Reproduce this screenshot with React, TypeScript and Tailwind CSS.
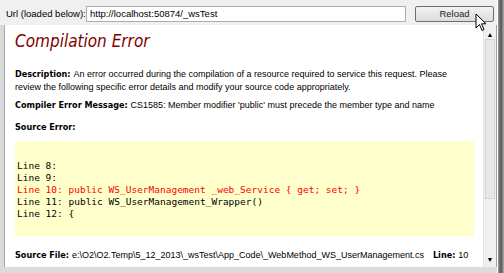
const verdana = { fontFamily: '"DejaVu Sans Condensed", "DejaVu Sans", sans-serif' };

function Cursor() {
  return (
    <svg className="absolute left-[475px] top-[13px]" width="13" height="19" viewBox="0 0 13 19">
      <path d="M1 1 L1 15 L4.5 11.5 L7 17.5 L9 16.5 L6.5 10.8 L11 10.8 Z" fill="#fff" stroke="#000" strokeWidth="1" strokeLinejoin="round" />
    </svg>
  );
}

function Scrollbar() {
  return (
    <div className="w-[14px] flex flex-col bg-[#f0f0f0] border-l border-[#e3e3e3] border-r border-r-[#a0a0a0]">
      <div className="h-[4px]" />
      <div className="h-[10px] flex items-center justify-center text-[7px] leading-none text-black">▲</div>
      <div className="mx-[1px] h-[160px] border border-[#d4d4d4] bg-[#e8e8e8]" />
      <div className="flex-1" />
      <div className="h-[12px] flex items-center justify-center text-[7px] leading-none text-black">▼</div>
      <div className="h-[2px]" />
    </div>
  );
}

const code = [
  { t: 'Line 8:', red: false },
  { t: 'Line 9:', red: false },
  { t: 'Line 10: public WS_UserManagement _web_Service { get; set; }', red: true },
  { t: 'Line 11: public WS_UserManagement_Wrapper()', red: false },
  { t: 'Line 12: {', red: false },
];

export default function App() {
  return (
    <div className="relative w-[504px] h-[273px] flex bg-[#f0f0f0] overflow-hidden" style={{ fontFamily: '"Liberation Sans", Arial, sans-serif' }}>
      <div className="w-[497px] flex flex-col">
        {/* toolbar */}
        <div className="h-[25px] flex items-center pl-[6px] pt-[3px]">
          <span className="text-[9.5px] text-black w-[80px]">Url (loaded below):</span>
          <div className="w-[320px] h-[16px] bg-white border border-[#abadb3] flex items-center pl-[3px] text-[9.5px] text-black">
            http://localhost:50874/_wsTest
          </div>
          <div className="ml-[9px] w-[79px] h-[16px] rounded-[2px] border border-[#707070] bg-gradient-to-b from-[#f2f2f2] to-[#dcdcdc] flex items-center justify-center text-[9.5px] text-[#222]">
            Reload
          </div>
        </div>

        {/* browser area */}
        <div className="flex-1 flex border-l-[4px] border-[#dadada] border-b-[6px] border-b-[#dcdcdc]">
          <div className="flex-1 bg-white pl-[10px] pr-[9px] pt-[6px] border-l border-[#a8a8a8]">
            <div className="text-[#800000] italic text-[17px] leading-[20px] mb-[17px]" style={verdana}>Compilation Error</div>

            <div className="text-[9px] leading-[13px] text-black">
              <b className="text-[9px]" style={verdana}>Description: </b>
              An error occurred during the compilation of a resource required to service this request. Please review the following specific error details and modify your source code appropriately.
            </div>

            <div className="mt-[5px] text-[9px] leading-[13px] text-black">
              <b className="text-[9px]" style={verdana}>Compiler Error Message: </b>
              CS1585: Member modifier 'public' must precede the member type and name
            </div>

            <div className="mt-[9px] text-[9px] leading-[13px] font-bold text-black" style={verdana}>Source Error:</div>

            <div className="mt-[7px] h-[95px] bg-[#ffffcc] pl-[2px] pt-[19px] text-[9.5px] leading-[12px]" style={{ fontFamily: '"DejaVu Sans Mono", monospace' }}>
              {code.map((l) => (
                <div key={l.t} className={`whitespace-pre ${l.red ? 'text-[#ff0000]' : 'text-black'}`}>{l.t}</div>
              ))}
            </div>

            <div className="mt-[13px] text-[9px] leading-[13px] text-black flex whitespace-nowrap">
              <span><b style={verdana}>Source File: </b>e:\O2\O2.Temp\5_12_2013\_wsTest\App_Code\_WebMethod_WS_UserManagement.cs</span>
              <span className="ml-[9px]"><b style={verdana}>Line: </b>10</span>
            </div>
          </div>
          <Scrollbar />
        </div>
      </div>

      {/* window edge shadow */}
      <div className="w-[7px] bg-gradient-to-r from-[#9a9a9a] via-[#555] to-[#b0b0b0] border-l border-[#fff]" />

      <Cursor />
    </div>
  );
}
